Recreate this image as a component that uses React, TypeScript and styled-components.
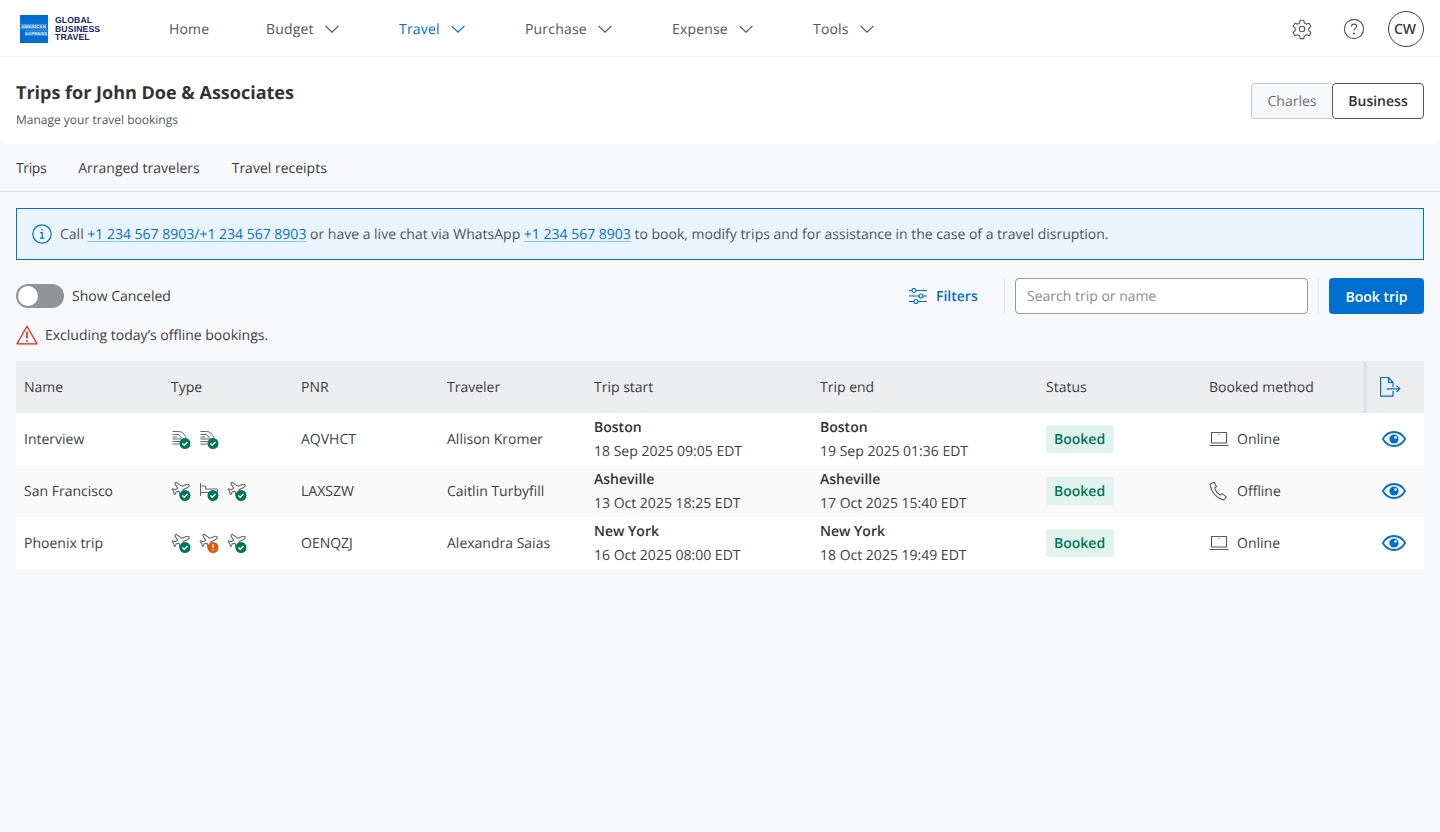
import React from "react";
import styled, { createGlobalStyle } from "styled-components";

const Global = createGlobalStyle`
  html, body { margin: 0; padding: 0; background: #f7f8fa; }
  body { font-family: "Open Sans", "Noto Sans", sans-serif; color: #3c3f42; -webkit-font-smoothing: antialiased; text-rendering: geometricPrecision; }
  * { box-sizing: border-box; }
`;

const Page = styled.div`
  width: 1440px;
  min-height: 832px;
  background: #f7f8fa;
`;
const TopBar = styled.header`
  height: 57px;
  background: #fff;
  border-bottom: 1px solid #f3f4f5;
  display: flex;
  align-items: center;
  padding: 2px 16px 0 20px;
`;
const Logo = styled.div`
  display: flex;
  align-items: center;
  gap: 6px;
  width: 149px;
`;
const LogoText = styled.div`
  font-family: "Liberation Sans", sans-serif;
  font-size: 8.7px;
  line-height: 8.6px;
  font-weight: 700;
  color: #14265e;
  letter-spacing: 0.1px;
  margin-left: 1px;
`;
const Nav = styled.nav`
  display: flex;
  align-items: center;
  flex: 1;
`;
const NavItem = styled.a<{ $w: number; $active?: boolean }>`
  width: ${p => p.$w}px;
  display: flex;
  align-items: center;
  gap: 11px;
  font-size: 14px;
  font-weight: 500;
  letter-spacing: 0.18px;
  color: ${p => (p.$active ? "#006fcf" : "#53565a")};
`;
const TopActions = styled.div`
  display: flex;
  align-items: center;
  gap: 14px;
`;
const IconSlot = styled.div`
  width: 38px;
  height: 36px;
  display: flex;
  align-items: center;
  justify-content: center;
  color: #53565a;
`;
const Avatar = styled.div`
  width: 36px;
  height: 36px;
  border: 1px solid #3c3f42;
  border-radius: 50%;
  display: flex;
  align-items: center;
  justify-content: center;
  padding-right: 2px;
  font-size: 14px;
  font-weight: 600;
  color: #3c3f42;
  margin-left: 1px;
`;
const TitleBar = styled.section`
  height: 87px;
  background: #fff;
  border-radius: 0 0 8px 8px;
  padding: 24px 16px 0;
  display: flex;
  justify-content: space-between;
`;
const Title = styled.h1`
  margin: 0;
  font-size: 18px;
  line-height: 24px;
  font-weight: 700;
  color: #333;
`;
const Subtitle = styled.p`
  margin: 7px 0 0;
  font-size: 12px;
  line-height: 16px;
  color: #53565a;
`;
const Segmented = styled.div`
  display: flex;
  height: 36px;
  margin-top: 2px;
`;
const Segment = styled.div<{ $on?: boolean }>`
  height: 36px;
  display: flex;
  align-items: center;
  justify-content: center;
  font-size: 14px;
  border-radius: ${p => (p.$on ? "4px" : "4px 0 0 4px")};
  width: ${p => (p.$on ? "92px" : "81px")};
  border: 1px solid ${p => (p.$on ? "#53565a" : "#c8c9cb")};
  border-right: ${p => (p.$on ? "1px solid #53565a" : "none")};
  background: ${p => (p.$on ? "#fff" : "#f7f8fa")};
  color: ${p => (p.$on ? "#333" : "#6b6e72")};
  font-weight: ${p => (p.$on ? 600 : 400)};
`;
const Tabs = styled.div`
  height: 48px;
  display: flex;
  align-items: center;
  gap: 32px;
  padding: 2px 16px 0;
  border-bottom: 1px solid #e3e4e6;
  font-size: 14px;
  color: #3c3f42;
`;
const Tab = styled.span<{ $tight?: boolean }>`
  letter-spacing: ${p => (p.$tight ? "-0.4px" : "0")};
`;
const Content = styled.main`
  padding: 16px 16px 0;
`;
const Banner = styled.div`
  height: 52px;
  background: #e9f4fd;
  border: 1px solid #006fcf;
  display: flex;
  align-items: center;
  padding: 0 15px;
  gap: 8px;
  font-size: 14px;
  color: #53565a;
`;
const Phone = styled.a`
  color: #006fcf;
  text-decoration: underline;
  text-decoration-color: #8cc0ec;
  text-underline-offset: 2px;
`;
const Toolbar = styled.div`
  height: 36px;
  margin-top: 18px;
  display: flex;
  align-items: center;
`;
const Switch = styled.div`
  width: 48px;
  height: 24px;
  border-radius: 12px;
  background: #929497;
  padding: 2px;
`;
const Knob = styled.div`
  width: 20px;
  height: 20px;
  border-radius: 50%;
  background: #fff;
`;
const SwitchLabel = styled.span`
  margin-left: 8px;
  font-size: 14px;
  color: #3c3f42;
  flex: 1;
`;
const FilterBtn = styled.div`
  width: 95px;
  height: 36px;
  display: flex;
  align-items: center;
  gap: 9px;
  font-size: 14px;
  font-weight: 600;
  color: #006fcf;
`;
const Divider = styled.div`
  width: 1px;
  height: 36px;
  background: #e9eaec;
`;
const Search = styled.div`
  width: 293px;
  height: 36px;
  margin: 0 10px;
  background: #fff;
  border: 1px solid #97999b;
  border-radius: 4px;
  padding: 0 11px;
  display: flex;
  align-items: center;
  font-size: 14px;
  color: #8a8d91;
`;
const BookBtn = styled.button`
  width: 95px;
  height: 36px;
  margin-left: 10px;
  background: #006fcf;
  color: #fff;
  border: 0;
  border-radius: 4px;
  font: 600 14px "Open Sans", sans-serif;
`;
const Warning = styled.div`
  margin-top: 10px;
  height: 22px;
  display: flex;
  align-items: center;
  gap: 7px;
  font-size: 14px;
  color: #3c3f42;
`;
const Table = styled.div`
  margin-top: 15px;
`;
const Row = styled.div<{ $head?: boolean; $alt?: boolean }>`
  display: grid;
  grid-template-columns: 147px 130px 146px 147px 226px 226px 163px 163px 60px;
  height: 52px;
  align-items: center;
  font-size: 14px;
  color: #3c3f42;
  background: ${p => (p.$head ? "#ecedef" : p.$alt ? "#f9f9fa" : "#fff")};
`;
const Cell = styled.div`
  padding-left: 8px;
`;
const TripCell = styled.div`
  padding: 2px 0 0 8px;
`;
const ExportCell = styled.div`
  height: 52px;
  border-left: 2px solid #dcdde0;
  display: flex;
  align-items: center;
  padding-left: 13px;
  color: #006fcf;
`;
const TypeCell = styled.div`
  padding-left: 8px;
  display: flex;
  gap: 8px;
  align-items: center;
`;
const City = styled.div`
  font-weight: 600;
  line-height: 24px;
  color: #333;
`;
const When = styled.div`
  line-height: 24px;
`;
const Badge = styled.span`
  display: inline-flex;
  align-items: center;
  height: 28px;
  padding: 0 9px 0 8px;
  background: #e2f2ec;
  color: #00775a;
  font-weight: 600;
  border-radius: 2px;
`;
const Method = styled.div`
  padding-left: 8px;
  display: flex;
  align-items: center;
  gap: 8px;
`;
const EyeCell = styled.div`
  padding-left: 18px;
  display: flex;
  align-items: center;
`;

const Chevron = ({ color = "#53565a" }: { color?: string }) => (
  <svg width="14" height="8" viewBox="0 0 14 8" fill="none" stroke={color} strokeWidth="1.2"><path d="M.6.8 7 7.2 13.4.8" /></svg>
);
const LogoMark = () => (
  <svg width="28" height="28" viewBox="0 0 28 28">
    <rect width="28" height="28" fill="#006fcf" />
    <text x="1" y="13" fontFamily="Liberation Sans, sans-serif" fontSize="4.2" fontWeight="700" fill="#fff" textLength="25" lengthAdjust="spacingAndGlyphs">AMERICAN</text>
    <text x="5" y="19.500" fontFamily="Liberation Sans, sans-serif" fontSize="4.2" fontWeight="700" fill="#fff" textLength="22" lengthAdjust="spacingAndGlyphs">EXPRESS</text>
    <path d="M0 9.400h27M0 13.800h27M5 15.900h23M5 20.200h23" stroke="#cfe4f7" strokeWidth=".5" opacity=".8" />
  </svg>
);
const Gear = () => (
  <svg width="22" height="22" viewBox="0 0 24 24" fill="none" stroke="#53565a" strokeWidth="1.2">
    <circle cx="12" cy="12" r="3" />
    <path d="M10 2.500h4l.6 3 2.200 1.200 2.900-1 2 3.500-2.300 2v2.600l2.300 2-2 3.500-2.900-1-2.200 1.200-.6 3h-4l-.6-3-2.200-1.200-2.900 1-2-3.500 2.300-2v-2.600l-2.300-2 2-3.500 2.900 1 2.200-1.200z" strokeLinejoin="round" />
  </svg>
);
const Help = () => (
  <svg width="22" height="22" viewBox="0 0 22 22" fill="none" stroke="#53565a" strokeWidth="1.1">
    <circle cx="11" cy="11" r="9.600" />
    <path d="M8.400 8.600c0-1.500 1.100-2.500 2.600-2.500s2.600 1 2.600 2.300c0 2-2.600 2-2.600 4.200" />
    <circle cx="11" cy="15.600" r=".5" fill="#53565a" />
  </svg>
);
const Info = () => (
  <svg width="20" height="20" viewBox="0 0 20 20" fill="none" stroke="#006fcf" strokeWidth="1.2">
    <circle cx="10" cy="10" r="9.200" />
    <circle cx="10" cy="5.800" r=".8" fill="#006fcf" stroke="none" />
    <path d="M8.200 8.600H10.200V14M8 14.200h4.400" />
  </svg>
);
const Sliders = () => (
  <svg width="18" height="16" viewBox="0 0 18 16" fill="none" stroke="#006fcf" strokeWidth="1.2">
    <path d="M0 2.500h3M7 2.500h11M0 8h10M14 8h4M0 13.500h5M9 13.500h9" />
    <circle cx="5" cy="2.500" r="2" /><circle cx="12" cy="8" r="2" /><circle cx="7" cy="13.500" r="2" />
  </svg>
);
const Triangle = () => (
  <svg width="22" height="20" viewBox="0 0 22 20" fill="none" stroke="#d8231f" strokeWidth="1.3">
    <path d="M11 1.200 21 18.800H1z" strokeLinejoin="round" />
    <path d="M11 6.500v7" strokeWidth="1.600" />
    <circle cx="11" cy="16" r=".9" fill="#d8231f" stroke="none" />
  </svg>
);
const Export = () => (
  <svg width="22" height="22" viewBox="0 0 22 22" fill="none" stroke="#006fcf" strokeWidth="1.2">
    <path d="M14 11V6.500L9.500 1.500H1.600v18.600h12.400V15" strokeLinejoin="round" />
    <path d="M9.500 1.500v5H14M7.500 12.800h13M17.500 9.600l3.200 3.200-3.200 3.200" />
  </svg>
);
const Eye = () => (
  <svg width="24" height="18" viewBox="0 0 24 18" fill="none">
    <path d="M.9 9C3.500 4.400 7.400 2 12 2s8.500 2.400 11.100 7C20.500 13.600 16.600 16 12 16S3.500 13.600.9 9z" stroke="#006fcf" strokeWidth="1.800" />
    <circle cx="12" cy="9" r="4.600" fill="#006fcf" />
    <circle cx="13.500" cy="7.500" r="1.300" fill="#fff" />
  </svg>
);
const Laptop = () => (
  <svg width="20" height="16" viewBox="0 0 20 16" fill="none" stroke="#53565a" strokeWidth="1.1">
    <path d="M2.500 12V1.500h15V12zM.5 14.500h19" />
    <path d="M9.500 3.500h1" />
  </svg>
);
const PhoneIcon = () => (
  <svg width="20" height="20" viewBox="0 0 20 20" fill="none" stroke="#53565a" strokeWidth="1.1">
    <path d="M2 2.500 5 1.200l2.500 4.500-1.800 1.500c.8 2.600 3.200 5.500 5.600 6.800l1.900-1.400 4 3-1.400 2.400c-.6.900-1.700 1-2.800.6C7.500 16.500 2.800 11 1.300 5.200 1 4 1.200 3 2 2.500z" strokeLinejoin="round" />
  </svg>
);

const Status = ({ warn }: { warn?: boolean }) => (
  <>
    <circle cx="14" cy="14.500" r="5.500" fill={warn ? "#e3570f" : "#00775a"} />
    {warn ? (
      <path d="M14 11.500v3.500M14 16.200v1" stroke="#fff" strokeWidth="1.400" fill="none" />
    ) : (
      <path d="M11.400 14.500l1.800 1.800 3.300-3.300" stroke="#fff" strokeWidth="1.300" fill="none" />
    )}
  </>
);
const Flight = ({ warn }: { warn?: boolean }) => (
  <svg width="20" height="20" viewBox="0 0 20 20">
    <g transform="translate(9 8) rotate(22) scale(.8) translate(-12 -12)">
      <path d="M17.800 19.200 16 11l3.500-3.500C21 6 21.500 4 21 3c-1-.5-3 0-4.500 1.500L13 8 4.800 6.200c-.5-.1-.9.1-1.100.5l-.3.5c-.2.5-.1 1 .3 1.300L9 12l-2 3H4l-1 1 3 2 2 3 1-1v-3l3-2 3.500 5.300c.3.4.8.5 1.300.3l.5-.2c.4-.3.6-.7.5-1.200z" fill="none" stroke="#63666a" strokeWidth="1.300" strokeLinejoin="round" />
    </g>
    <Status warn={warn} />
  </svg>
);
const Train = () => (
  <svg width="20" height="20" viewBox="0 0 20 20">
    <path d="M1.500 2.500H7.500c3.500 0 6 2.500 7.500 6v1.500H1.500M1.500 5.500H7.500l3 3.500M1.500 8H6M1.500 12.500h9M1.500 15h7" fill="none" stroke="#63666a" strokeWidth="1" />
    <Status />
  </svg>
);
const Bed = () => (
  <svg width="20" height="20" viewBox="0 0 20 20">
    <path d="M1.500 2v13M1.500 11.500H18.500M18.500 8H6.500V5H1.500M18.500 8v3.500" fill="none" stroke="#63666a" strokeWidth="1" />
    <Status />
  </svg>
);

type Trip = {
  name: string; icons: React.ReactNode[]; pnr: string; traveler: string;
  from: string; start: string; end: string; offline?: boolean;
};
const trips: Trip[] = [
  { name: "Interview", icons: [<Train key="a" />, <Train key="b" />], pnr: "AQVHCT", traveler: "Allison Kromer", from: "Boston", start: "18 Sep 2025 09:05 EDT", end: "19 Sep 2025 01:36 EDT" },
  { name: "San Francisco", icons: [<Flight key="a" />, <Bed key="b" />, <Flight key="c" />], pnr: "LAXSZW", traveler: "Caitlin Turbyfill", from: "Asheville", start: "13 Oct 2025 18:25 EDT", end: "17 Oct 2025 15:40 EDT", offline: true },
  { name: "Phoenix trip", icons: [<Flight key="a" />, <Flight key="b" warn />, <Flight key="c" />], pnr: "OENQZJ", traveler: "Alexandra Saias", from: "New York", start: "16 Oct 2025 08:00 EDT", end: "18 Oct 2025 19:49 EDT" },
];

const navItems = [
  { label: "Home", w: 97 }, { label: "Budget", w: 133, chev: true }, { label: "Travel", w: 126, chev: true, active: true },
  { label: "Purchase", w: 147, chev: true }, { label: "Expense", w: 141, chev: true }, { label: "Tools", w: 100, chev: true },
];

export default function App() {
  return (
    <Page>
      <Global />
      <TopBar>
        <Logo>
          <LogoMark />
          <LogoText>GLOBAL<br />BUSINESS<br />TRAVEL</LogoText>
        </Logo>
        <Nav>
          {navItems.map(n => (
            <NavItem key={n.label} $w={n.w} $active={n.active}>
              {n.label}
              {n.chev && <Chevron color={n.active ? "#006fcf" : "#53565a"} />}
            </NavItem>
          ))}
        </Nav>
        <TopActions>
          <IconSlot><Gear /></IconSlot>
          <IconSlot><Help /></IconSlot>
          <Avatar>CW</Avatar>
        </TopActions>
      </TopBar>
      <TitleBar>
        <div>
          <Title>Trips for John Doe &amp; Associates</Title>
          <Subtitle>Manage your travel bookings</Subtitle>
        </div>
        <Segmented>
          <Segment>Charles</Segment>
          <Segment $on>Business</Segment>
        </Segmented>
      </TitleBar>
      <Tabs>
        <Tab $tight>Trips</Tab>
        <Tab>Arranged travelers</Tab>
        <Tab>Travel receipts</Tab>
      </Tabs>
      <Content>
        <Banner>
          <Info />
          <span>
            Call <Phone>+1 234 567 8903/+1 234 567 8903</Phone> or have a live chat via WhatsApp <Phone>+1 234 567 8903</Phone> to book, modify trips and for assistance in the case of a travel disruption.
          </span>
        </Banner>
        <Toolbar>
          <Switch><Knob /></Switch>
          <SwitchLabel>Show Canceled</SwitchLabel>
          <FilterBtn><Sliders />Filters</FilterBtn>
          <Divider />
          <Search>Search trip or name</Search>
          <Divider />
          <BookBtn>Book trip</BookBtn>
        </Toolbar>
        <Warning><Triangle />Excluding today’s offline bookings.</Warning>
        <Table>
          <Row $head>
            <Cell>Name</Cell><Cell>Type</Cell><Cell>PNR</Cell><Cell>Traveler</Cell>
            <Cell>Trip start</Cell><Cell>Trip end</Cell><Cell>Status</Cell><Cell>Booked method</Cell>
            <ExportCell><Export /></ExportCell>
          </Row>
          {trips.map((t, i) => (
            <Row key={t.name} $alt={i === 1}>
              <Cell>{t.name}</Cell>
              <TypeCell>{t.icons}</TypeCell>
              <Cell>{t.pnr}</Cell>
              <Cell>{t.traveler}</Cell>
              <TripCell><City>{t.from}</City><When>{t.start}</When></TripCell>
              <TripCell><City>{t.from}</City><When>{t.end}</When></TripCell>
              <Cell><Badge>Booked</Badge></Cell>
              <Method>{t.offline ? <PhoneIcon /> : <Laptop />}{t.offline ? "Offline" : "Online"}</Method>
              <EyeCell><Eye /></EyeCell>
            </Row>
          ))}
        </Table>
      </Content>
    </Page>
  );
}
